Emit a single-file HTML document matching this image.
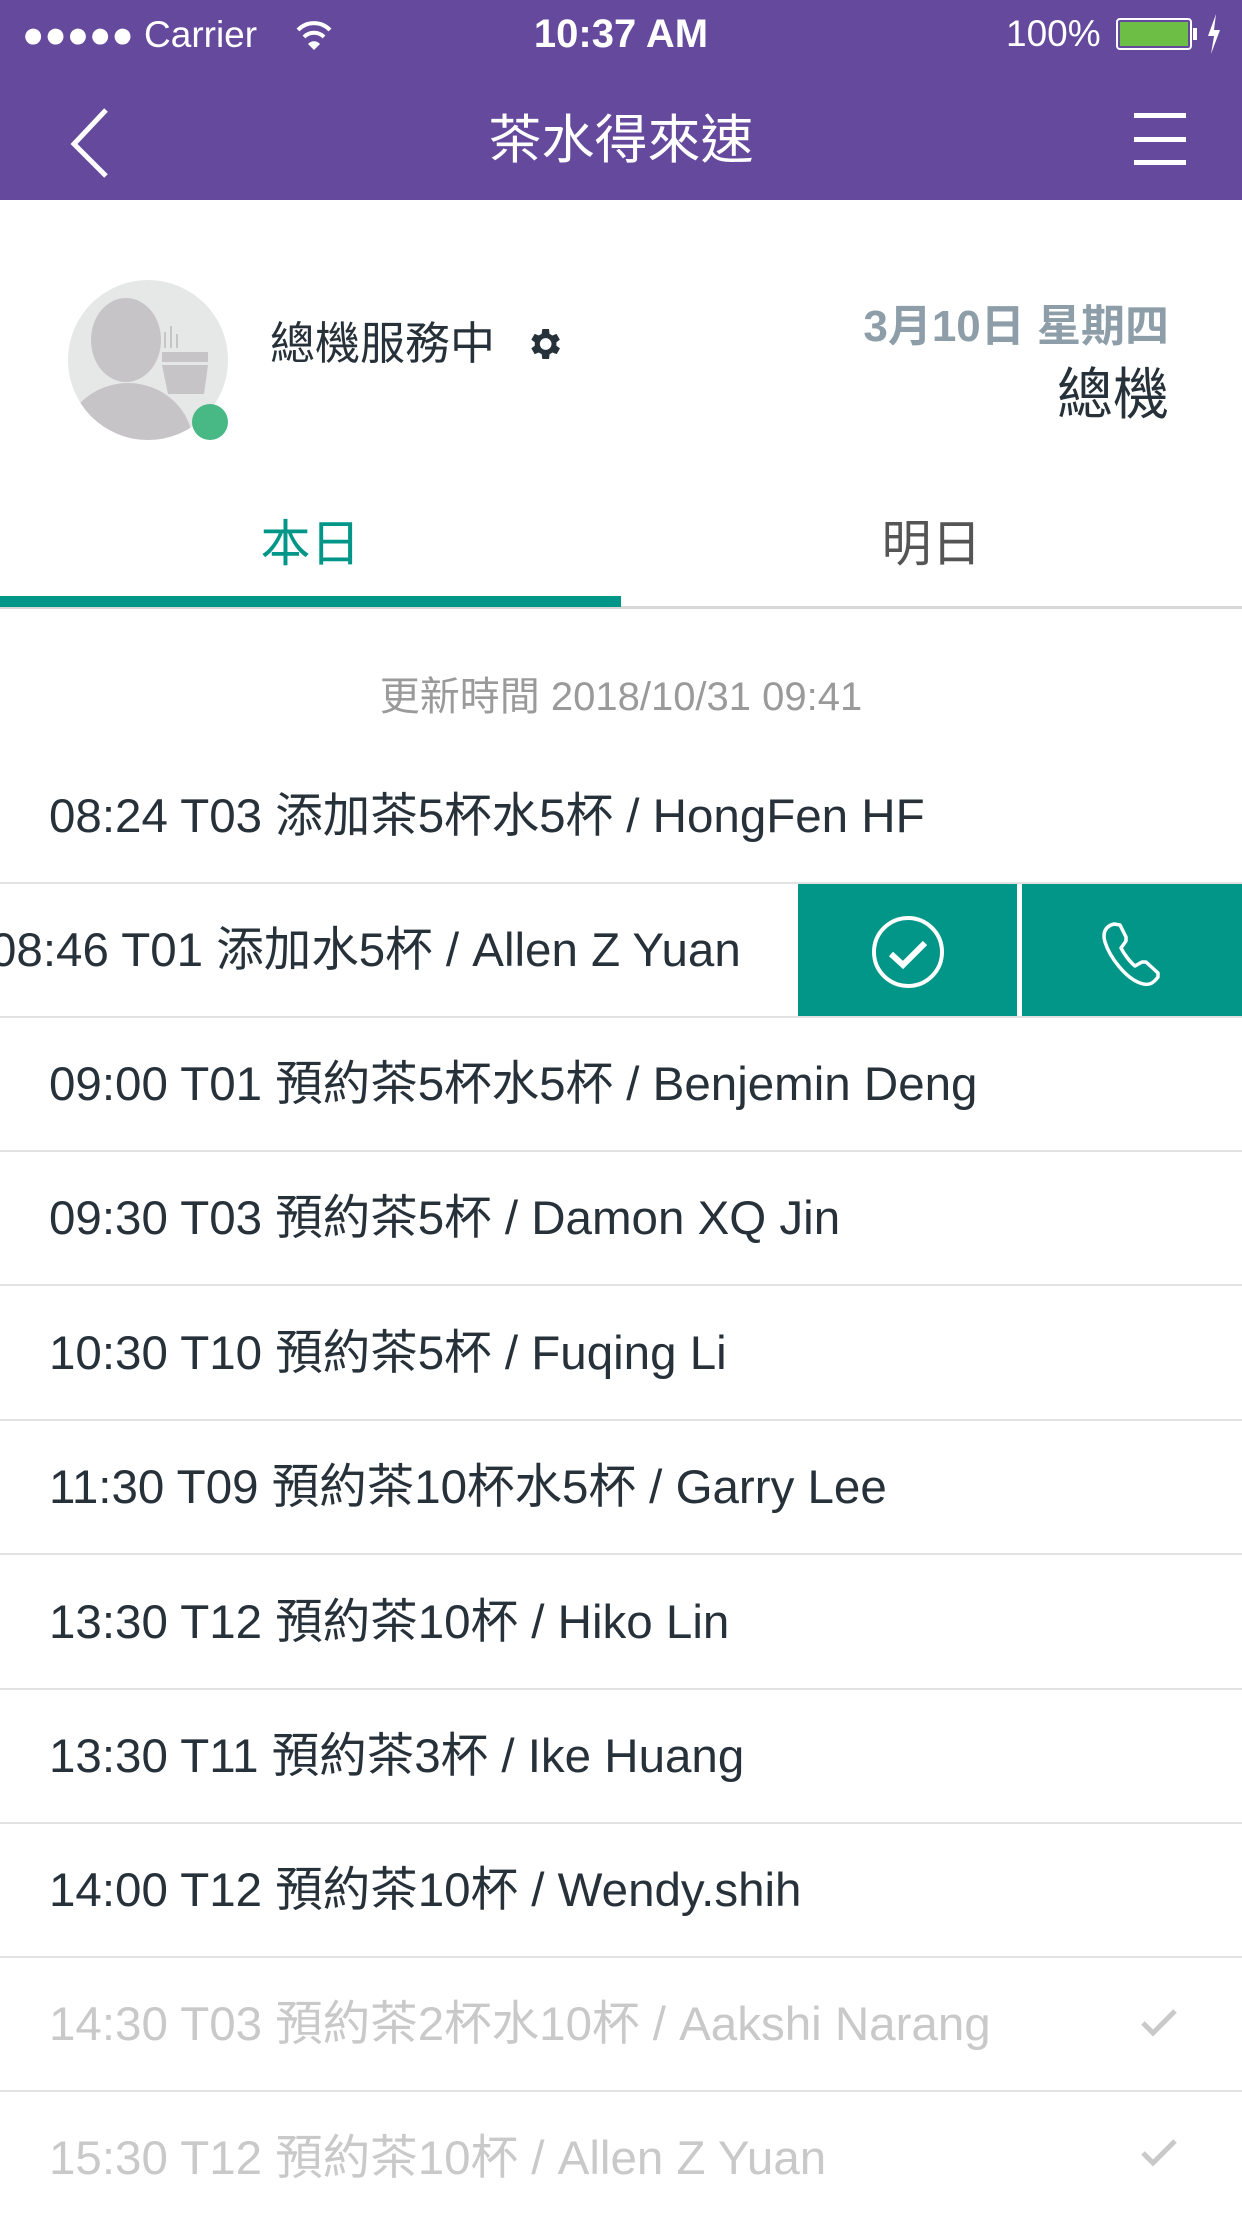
<!DOCTYPE html>
<html><head><meta charset="utf-8">
<style>
*{margin:0;padding:0;box-sizing:border-box}
body{width:1242px;height:2208px;overflow:hidden;background:#fff;font-family:"Liberation Sans","Noto Sans CJK TC",sans-serif;color:#27313a;position:relative}
.abs{position:absolute}
.top{left:0;top:0;width:1242px;height:200px;background:#65499c;color:#fff}
.row{position:absolute;left:0;width:1242px;height:134px;border-bottom:2px solid #e2e2e2;overflow:hidden}
.row span{position:absolute;left:49px;top:0;line-height:134px;font-size:47.5px;white-space:nowrap}
.done span{color:#c9c9c9}
.chk{position:absolute;left:1140px;top:50px}
</style></head><body>
<div class="abs top">
  <div class="abs" style="left:22px;top:14px;font-size:37px;line-height:42px">●●●●● Carrier</div>
  <svg class="abs" style="left:294px;top:18px" width="40" height="34" viewBox="0 0 40 34"><path d="M4 12 A22 22 0 0 1 36 12" stroke="#fff" stroke-width="4" fill="none"/><path d="M10 19 A14 14 0 0 1 30 19" stroke="#fff" stroke-width="4" fill="none"/><path d="M14 26 L20 32 L26 26 A8 8 0 0 0 14 26Z" fill="#fff"/></svg>
  <div class="abs" style="left:0;width:1242px;top:12px;text-align:center;font-size:40px;font-weight:bold;line-height:44px">10:37 AM</div>
  <div class="abs" style="left:1006px;top:13px;font-size:37px;line-height:42px">100%</div>
  <div class="abs" style="left:1116px;top:18px;width:76px;height:32px;border:2px solid #fff;border-radius:4px;padding:2px"><div style="width:100%;height:100%;background:#6cbe45"></div></div>
  <div class="abs" style="left:1193px;top:28px;width:4px;height:12px;background:#fff"></div>
  <svg class="abs" style="left:1206px;top:14px" width="16" height="40" viewBox="0 0 16 40"><path d="M10 0 L2 22 H8 L5 40 L14 16 H8 Z" fill="#fff"/></svg>
  <svg class="abs" style="left:68px;top:106px" width="44" height="74" viewBox="0 0 44 74"><path d="M38 4 L6 38 L38 70" stroke="#fff" stroke-width="5" fill="none"/></svg>
  <div class="abs" style="left:0;width:1242px;top:110px;text-align:center;font-size:53px;line-height:62px">茶水得來速</div>
  <div class="abs" style="left:1134px;top:113px;width:52px;height:5px;background:#fff"></div>
  <div class="abs" style="left:1134px;top:137px;width:52px;height:5px;background:#fff"></div>
  <div class="abs" style="left:1134px;top:160px;width:52px;height:5px;background:#fff"></div>
</div>
<svg class="abs" style="left:68px;top:280px" width="170" height="170" viewBox="0 0 170 170">
  <defs><clipPath id="c"><circle cx="80" cy="80" r="80"/></clipPath></defs>
  <circle cx="80" cy="80" r="80" fill="#e6e7e7"/>
  <g clip-path="url(#c)"><ellipse cx="58" cy="60" rx="35" ry="42" fill="#c6c4c6"/><ellipse cx="60" cy="165" rx="65" ry="62" fill="#c6c4c6"/></g>
  <rect x="96" y="52" width="2" height="16" fill="#c6c4c6"/><rect x="102" y="46" width="2" height="22" fill="#c6c4c6"/><rect x="108" y="54" width="2" height="14" fill="#c6c4c6"/>
  <rect x="94" y="72" width="46" height="10" fill="#c6c4c6"/><path d="M94 85 H140 L136 114 H100 Z" fill="#c6c4c6"/>
  <circle cx="142" cy="142" r="18" fill="#48b884"/>
</svg>
<div class="abs" style="left:270px;top:316px;font-size:45px;line-height:56px">總機服務中</div>
<svg class="abs" style="left:524px;top:324px" width="40" height="40" viewBox="0 0 24 24"><path fill="#27313a" d="M19.4 13a7.5 7.5 0 0 0 0-2l2.1-1.6-2-3.5-2.5 1a7 7 0 0 0-1.7-1L15 3h-4l-.4 2.9a7 7 0 0 0-1.7 1l-2.5-1-2 3.5L6.5 11a7.5 7.5 0 0 0 0 2l-2.1 1.6 2 3.5 2.5-1a7 7 0 0 0 1.7 1L11 21h4l.4-2.9a7 7 0 0 0 1.7-1l2.5 1 2-3.5zM13 15.5a3.5 3.5 0 1 1 0-7 3.5 3.5 0 0 1 0 7z"/></svg>
<div class="abs" style="right:73px;top:299px;font-size:44px;line-height:56px;color:#8e9ea9;font-weight:bold">3月10日 星期四</div>
<div class="abs" style="right:73px;top:362px;font-size:56px;line-height:66px">總機</div>
<div class="abs" style="left:0;width:621px;top:514px;text-align:center;font-size:50px;line-height:60px;color:#029688">本日</div>
<div class="abs" style="left:621px;width:621px;top:514px;text-align:center;font-size:50px;line-height:60px;color:#555">明日</div>
<div class="abs" style="left:0;top:606px;width:1242px;height:3px;background:#d8d8d8"></div>
<div class="abs" style="left:0;top:596px;width:621px;height:11px;background:#029688"></div>
<div class="abs" style="left:0;width:1242px;top:674px;text-align:center;font-size:40px;line-height:46px;color:#9a9a9a">更新時間 2018/10/31 09:41</div>

<div class="row" style="top:750px"><span>08:24 T03 添加茶5杯水5杯 / HongFen HF</span></div>
<div class="row" style="top:884px"><span style="left:-10px">08:46 T01 添加水5杯 / Allen Z Yuan</span>
  <div class="abs" style="left:798px;top:0;width:219px;height:134px;background:#029688"></div>
  <div class="abs" style="left:1022px;top:0;width:220px;height:134px;background:#029688"></div>
  <svg class="abs" style="left:870px;top:30px" width="76" height="76" viewBox="0 0 76 76"><circle cx="38" cy="38" r="34" stroke="#fff" stroke-width="4" fill="none"/><path d="M21 40 L33 51 L55 29" stroke="#fff" stroke-width="6" fill="none"/></svg>
  <svg class="abs" style="left:1100px;top:36px" width="64" height="68" viewBox="0 0 64 68"><path d="M14 4 C6 6 2 12 5 22 C10 38 26 58 40 63 C48 66 53 64 58 57 L58 53 L46 42 L42 42 L35 46 C30 42 24 34 21 28 L26 21 L26 17 L20 5 Z" stroke="#fff" stroke-width="3.5" fill="none" stroke-linejoin="round"/></svg>
</div>
<div class="row" style="top:1018px"><span>09:00 T01 預約茶5杯水5杯 / Benjemin Deng</span></div>
<div class="row" style="top:1152px"><span>09:30 T03 預約茶5杯 / Damon XQ Jin</span></div>
<div class="row" style="top:1287px"><span>10:30 T10 預約茶5杯 / Fuqing Li</span></div>
<div class="row" style="top:1421px"><span>11:30 T09 預約茶10杯水5杯 / Garry Lee</span></div>
<div class="row" style="top:1556px"><span>13:30 T12 預約茶10杯 / Hiko Lin</span></div>
<div class="row" style="top:1690px"><span>13:30 T11 預約茶3杯 / Ike Huang</span></div>
<div class="row" style="top:1824px"><span>14:00 T12 預約茶10杯 / Wendy.shih</span></div>
<div class="row done" style="top:1958px"><span>14:30 T03 預約茶2杯水10杯 / Aakshi Narang</span>
  <svg class="chk" width="38" height="30" viewBox="0 0 38 30"><path d="M3 15 L13 25 L35 3" stroke="#c9c9c9" stroke-width="5" fill="none"/></svg></div>
<div class="row done" style="top:2092px;border:none"><span>15:30 T12 預約茶10杯 / Allen Z Yuan</span>
  <svg class="chk" style="top:46px" width="38" height="30" viewBox="0 0 38 30"><path d="M3 15 L13 25 L35 3" stroke="#c9c9c9" stroke-width="5" fill="none"/></svg></div>
</body></html>
